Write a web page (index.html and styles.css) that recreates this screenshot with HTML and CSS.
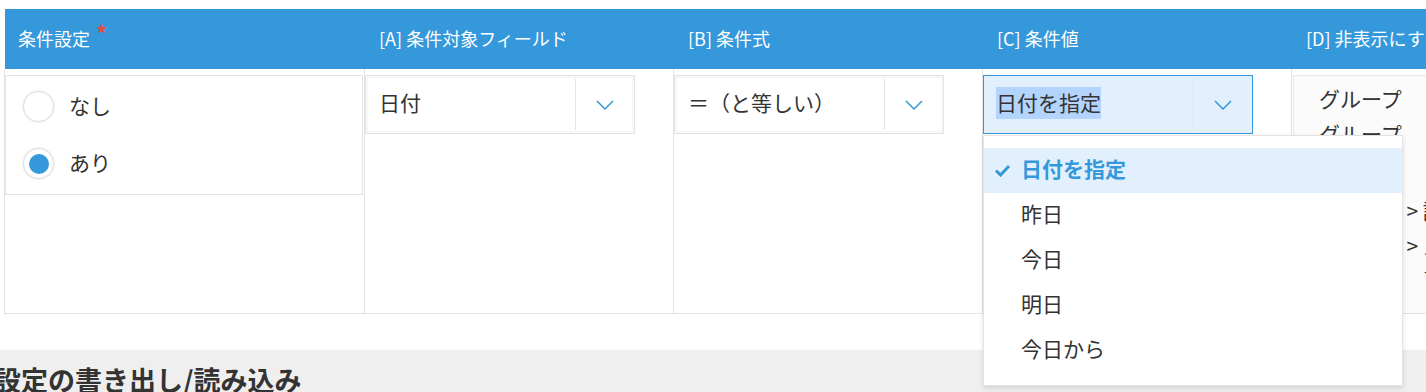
FILE: index.html
```html
<!DOCTYPE html>
<html lang="ja">
<head>
    <meta charset="UTF-8" />
    <meta name="viewport" content="width=device-width, initial-scale=1" />
    <title>条件設定</title>
    <link rel="stylesheet" href="styles.css">
</head>
<body>
    <div class="page">
        <div class="cond-table">
            <div class="thead">
                <div class="th">条件設定<span class="required">*</span></div>
                <div class="th">[A] 条件対象フィールド</div>
                <div class="th">[B] 条件式</div>
                <div class="th">[C] 条件値</div>
                <div class="th">[D] 非表示にするフィールド</div>
            </div>
            <div class="tbody">
                <div class="td">
                    <div class="radio-box">
                        <label class="radio-row">
                            <span class="radio"></span>
                            <span class="radio-label">なし</span>
                        </label>
                        <label class="radio-row">
                            <span class="radio checked"></span>
                            <span class="radio-label">あり</span>
                        </label>
                    </div>
                </div>
                <div class="td">
                    <div class="select">
                        <div class="select-value">日付</div>
                        <div class="select-btn">
                            <svg width="18" height="10" viewBox="0 0 18 10"><path d="M1 1 L9 9 L17 1" fill="none" stroke="#3498db" stroke-width="1.5"/></svg>
                        </div>
                    </div>
                </div>
                <div class="td">
                    <div class="select">
                        <div class="select-value">＝（と等しい）</div>
                        <div class="select-btn">
                            <svg width="18" height="10" viewBox="0 0 18 10"><path d="M1 1 L9 9 L17 1" fill="none" stroke="#3498db" stroke-width="1.5"/></svg>
                        </div>
                    </div>
                </div>
                <div class="td dropdown-cell">
                    <div class="select focused">
                        <div class="select-value"><span class="selected-text">日付を指定</span></div>
                        <div class="select-btn">
                            <svg width="18" height="10" viewBox="0 0 18 10"><path d="M1 1 L9 9 L17 1" fill="none" stroke="#3498db" stroke-width="1.5"/></svg>
                        </div>
                    </div>
                    <ul class="menu">
                        <li class="menu-item active">
                            <svg class="check" width="17" height="13" viewBox="0 0 17 13"><path d="M2 6.5 L6.5 11 L15 2" fill="none" stroke="#3498db" stroke-width="3"/></svg>
                            日付を指定
                        </li>
                        <li class="menu-item">昨日</li>
                        <li class="menu-item">今日</li>
                        <li class="menu-item">明日</li>
                        <li class="menu-item">今日から</li>
                    </ul>
                </div>
                <div class="td">
                    <div class="field-box">
                        <div class="field-list">
                            <div class="field-line">グループ</div>
                            <div class="field-line">グループ</div>
                            <div class="field-line">グループ</div>
                            <div class="field-line sub">グループ &gt; 詳細</div>
                            <div class="field-line">グループ &gt; ステータス</div>
                            <div class="field-line">グループ &gt; 開始日</div>
                        </div>
                    </div>
                </div>
            </div>
        </div>

        <div class="io-section">
            <h2>設定の書き出し/読み込み</h2>
        </div>
    </div>
</body>
</html>
```

FILE: styles.css
```css
html, body {
    margin: 0;
    padding: 0;
    background: #fff;
    overflow: hidden;
}
body {
    font-family: "Noto Sans CJK JP", "Noto Sans", sans-serif;
    color: #333;
    width: 1426px;
    height: 392px;
}
.page {
    padding-top: 9px;
}
.cond-table {
    margin-left: 4px;
    width: 1600px;
}
.thead,
.tbody {
    display: grid;
    grid-template-columns: 360px 309px 309px 309px 313px;
}
.thead {
    background: #3498db;
    height: 60px;
    margin-left: 1px;
}
.th {
    color: #fff;
    font-size: 18px;
    line-height: 58px;
    padding-left: 13px;
    white-space: nowrap;
}
.th + .th {
    padding-left: 14px;
}
.required {
    color: #e74c3c;
    font-size: 22px;
    font-weight: bold;
    margin-left: 6px;
    vertical-align: 4px;
    line-height: 1;
}
.tbody {
    height: 244px;
    border-bottom: 1px solid #e3e3e3;
}
.td {
    border-left: 1px solid #e3e3e3;
    padding-top: 6px;
    position: relative;
    font-size: 21px;
}

/* radio */
.radio-box {
    border: 1px solid #e3e3e3;
    width: 356px;
    padding: 2px 0;
}
.radio-row {
    display: flex;
    align-items: center;
    height: 57px;
    padding-left: 17px;
    gap: 15px;
}
.radio-label {
    padding-bottom: 4px;
}
.radio {
    width: 29px;
    height: 29px;
    border: 1px solid #e0e0e0;
    border-radius: 50%;
    box-shadow: 0 0 0 1px #f2f2f2;
    display: flex;
    align-items: center;
    justify-content: center;
    background: #fff;
}
.radio.checked::after {
    content: "";
    width: 20px;
    height: 20px;
    border-radius: 50%;
    background: #3498db;
}

/* select */
.select {
    width: 268px;
    height: 57px;
    border: 1px solid #e3e3e3;
    display: flex;
    background: #fff;
    box-shadow: inset 0 0 0 2px #f7f7f7;
}
.select-value {
    flex: 1;
    padding-left: 13px;
    padding-bottom: 5px;
    display: flex;
    align-items: center;
    white-space: nowrap;
}
.select-btn {
    width: 59px;
    display: flex;
    align-items: center;
    justify-content: center;
    position: relative;
}
.select-btn::before {
    content: "";
    position: absolute;
    left: 0;
    top: 3px;
    bottom: 3px;
    border-left: 1px solid #e3e3e3;
}
.select.focused {
    border-color: #3498db;
    background: #e2f0fd;
    box-shadow: none;
}
.select.focused .select-value {
    padding-left: 12px;
    padding-bottom: 3px;
}
.selected-text {
    background: #b3d4fc;
    line-height: 31px;
    padding-bottom: 1px;
}

/* dropdown menu */
.menu {
    position: absolute;
    top: 66px;
    left: 0;
    width: 418px;
    margin: 0;
    padding: 12px 0;
    list-style: none;
    background: #fff;
    border: 1px solid #e3e3e3;
    box-shadow: 0 2px 5px rgba(0, 0, 0, 0.12);
    z-index: 10;
}
.menu-item {
    height: 45px;
    line-height: 41px;
    padding-left: 37px;
    position: relative;
    white-space: nowrap;
}
.menu-item.active {
    background: #e2f0fd;
    color: #3498db;
    font-weight: bold;
}
.check {
    position: absolute;
    left: 10px;
    top: 16px;
}

/* hidden fields list */
.field-box {
    margin-left: 1px;
    height: 237px;
    border: 1px solid #e8e8e8;
    border-bottom: none;
    background: #fbfbfb;
}
.field-list {
    height: 192px;
    padding-top: 5px;
    padding-left: 25px;
    overflow: hidden;
}
.field-line {
    height: 35px;
    line-height: 35px;
    white-space: nowrap;
}
.field-line.sub {
    margin-top: 7px;
}

/* export / import */
.io-section {
    margin-top: 36px;
    background: #efefef;
    height: 60px;
    padding-top: 12px;
}
.io-section h2 {
    margin: 0 0 0 -6px;
    font-size: 27px;
    line-height: 36px;
    font-weight: bold;
    color: #333;
    white-space: nowrap;
}
```
